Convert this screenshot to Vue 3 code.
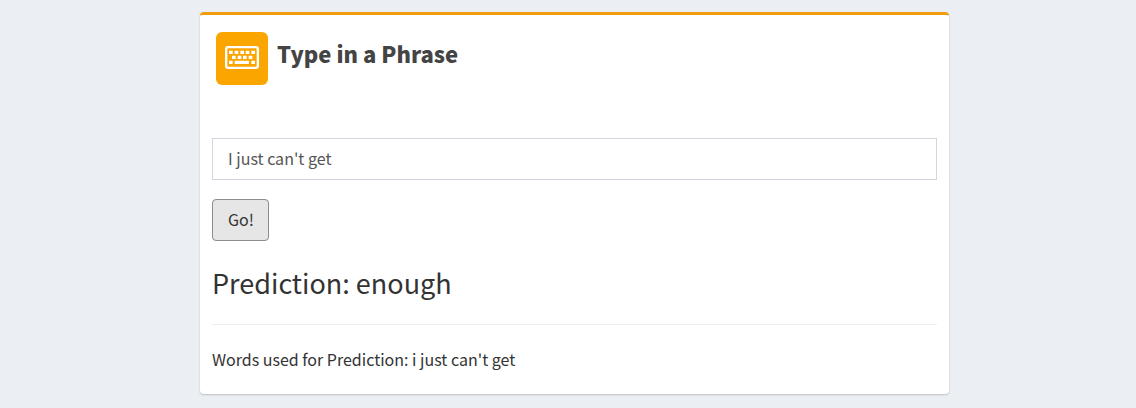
<script setup>
import { ref, computed } from 'vue'

const phrase = ref("I just can't get")
const submitted = ref(phrase.value)
const prediction = ref('enough')
const words = computed(() => submitted.value.toLowerCase())

const keys = [
  [12, 14], [29, 14], [46, 14], [62, 14], [79, 14],
  [21, 29], [38, 29], [54, 29], [71, 29],
  [12, 44], [79, 44],
]

function predict() {
  submitted.value = phrase.value
}
</script>

<template>
  <main class="page">
    <section class="card">
      <header class="head">
        <span class="badge">
          <svg class="keyboard" viewBox="0 0 102 69" aria-hidden="true">
            <rect x="3.5" y="3.5" width="95" height="62" rx="6" fill="none" stroke="#fff" stroke-width="7" />
            <rect v-for="([x, y], i) in keys" :key="i" :x="x" :y="y" width="11" height="10" rx="1" fill="#fff" />
            <rect x="29" y="44" width="43" height="10" rx="1" fill="#fff" />
          </svg>
        </span>
        <h1 class="title"><label for="phrase">Type in a Phrase</label></h1>
      </header>
      <form class="form" @submit.prevent="predict">
        <input id="phrase" v-model="phrase" class="field" type="text" autocomplete="off" spellcheck="false" />
        <button class="go" type="submit">Go!</button>
      </form>
      <h2 class="prediction">Prediction: {{ prediction }}</h2>
      <hr class="rule" />
      <p class="words">Words used for Prediction: {{ words }}</p>
    </section>
  </main>
</template>

<style>
body {
  background: #ebeef3;
}
</style>

<style scoped>
.page {
  display: grid;
  grid-template-columns: 200fr 749fr 187fr;
  padding: 12px 0;
  font-family: "Source Sans Pro", "Noto Sans CJK SC", "Open Sans", sans-serif;
  font-size: 16px;
  line-height: 24px;
  color: #333;
}
.card {
  grid-column: 2;
  min-width: 0;
  box-sizing: border-box;
  padding: 17px 12px 23px;
  background: #fff;
  border-top: 3px solid #f39c12;
  border-radius: 4px;
  box-shadow: 0 1px 2px rgba(0, 0, 0, 0.2);
}
.head {
  display: flex;
  align-items: flex-start;
  gap: 9px;
  padding-left: 4px;
}
.badge {
  display: flex;
  align-items: center;
  justify-content: center;
  box-sizing: border-box;
  width: 52px;
  height: 53px;
  padding-bottom: 2px;
  background: #faa500;
  border-radius: 6px;
}
.keyboard {
  width: 34px;
  height: 23px;
}
.title {
  margin: 3px 0 0;
  font-size: 22px;
  line-height: 36px;
  font-weight: 900;
  color: #444;
}
.form {
  display: flex;
  flex-direction: column;
  align-items: flex-start;
  gap: 19px;
  margin-top: 53px;
}
.field {
  box-sizing: border-box;
  width: 100%;
  height: 42px;
  padding: 0 15px 2px;
  border: 1px solid #d2d6de;
  border-radius: 0;
  background: #fff;
  font: inherit;
  color: #555;
  outline: none;
}
.go {
  height: 42px;
  padding: 0 14px 2px 15px;
  border: 1px solid #8c8c8c;
  border-radius: 4px;
  background: #e6e6e6;
  font: inherit;
  color: #333;
  cursor: pointer;
}
.prediction {
  margin: 23px 0 0;
  font-size: 27px;
  line-height: 38px;
  font-weight: 400;
}
.rule {
  margin: 22px 0 0;
  border: 0;
  border-top: 1px solid #eee;
}
.words {
  margin: 22px 0 0;
}
</style>
